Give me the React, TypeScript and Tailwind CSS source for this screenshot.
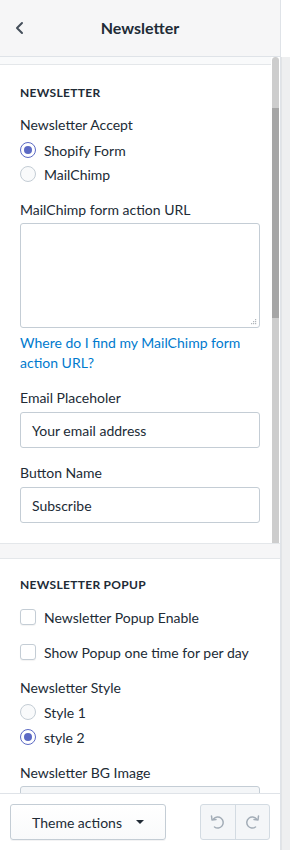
import React from "react";

const font = { fontFamily: "Lato, 'Noto Sans', Arial, sans-serif" };

function Radio({ checked, label }: { checked?: boolean; label: string }) {
  return (
    <div className="flex items-center h-[24px]">
      <span
        className={
          "w-[16px] h-[16px] rounded-full border flex items-center justify-center shrink-0 " +
          (checked ? "border-[#5c6ac4] bg-white" : "border-[#c4cdd5] bg-[#f9fafb]")
        }
      >
        {checked && <span className="w-[8px] h-[8px] rounded-full bg-[#5c6ac4]" />}
      </span>
      <span className="ml-[8px] text-[14px] text-[#212b36]">{label}</span>
    </div>
  );
}

function Checkbox({ label }: { label: string }) {
  return (
    <div className="flex items-center h-[24px]">
      <span className="w-[16px] h-[16px] rounded-[3px] border border-[#c4cdd5] bg-white shadow-[0_1px_1px_rgba(0,0,0,0.05)] shrink-0" />
      <span className="ml-[8px] text-[14px] text-[#212b36]">{label}</span>
    </div>
  );
}

function Label({ children }: { children: React.ReactNode }) {
  return <div className="text-[14px] text-[#212b36] leading-[20px]">{children}</div>;
}

function Heading({ children }: { children: React.ReactNode }) {
  return (
    <div className="text-[12px] font-bold tracking-[0.3px] text-[#212b36] leading-[16px] uppercase">
      {children}
    </div>
  );
}

function TextInput({ value }: { value: string }) {
  return (
    <div className="h-[36px] border border-[#c4cdd5] rounded-[3px] bg-white flex items-center px-[11px] text-[14px] text-[#212b36]">
      {value}
    </div>
  );
}

export default function App() {
  return (
    <div className="w-[290px] h-[850px] flex bg-white overflow-hidden" style={font}>
      <div className="w-[281px] h-full flex flex-col border-r border-[#dfe3e8]">
        {/* Header */}
        <div className="h-[57px] shrink-0 bg-[#f6f6f7] border-b border-[#dfe3e8] flex items-center relative">
          <svg className="absolute left-[14px] top-[21px]" width="12" height="14" viewBox="0 0 12 14">
            <path d="M8 2 L3 7 L8 12" fill="none" stroke="#454f5b" strokeWidth="2" strokeLinecap="round" strokeLinejoin="round" />
          </svg>
          <div className="w-full text-center text-[16px] font-bold text-[#212b36]">Newsletter</div>
        </div>

        {/* Main */}
        <div className="flex-1 flex flex-col overflow-hidden">
          <div className="h-[486px] shrink-0 flex">
            <div className="flex-1 flex flex-col">
              <div className="h-[8px] bg-[#f9fafb] border-b border-[#e4e7ea]" />
              <div className="flex-1 bg-white pl-[20px] pr-[11px] pt-[20px]">
                <Heading>Newsletter</Heading>
                <div className="mt-[14px]">
                  <Label>Newsletter Accept</Label>
                  <div className="mt-[3px]">
                    <Radio checked label="Shopify Form" />
                    <Radio label="MailChimp" />
                  </div>
                </div>
                <div className="mt-[14px]">
                  <Label>MailChimp form action URL</Label>
                  <div className="mt-[3px] h-[105px] border border-[#c4cdd5] rounded-[3px] bg-white relative">
                    <svg className="absolute right-[2px] bottom-[2px]" width="7" height="7" viewBox="0 0 7 7">
                      <rect x="5" y="1" width="1.2" height="1.2" fill="#b0b6bb" />
                      <rect x="3" y="3" width="1.2" height="1.2" fill="#b0b6bb" />
                      <rect x="5" y="3" width="1.2" height="1.2" fill="#b0b6bb" />
                      <rect x="1" y="5" width="1.2" height="1.2" fill="#b0b6bb" />
                      <rect x="3" y="5" width="1.2" height="1.2" fill="#b0b6bb" />
                      <rect x="5" y="5" width="1.2" height="1.2" fill="#b0b6bb" />
                    </svg>
                  </div>
                  <div className="mt-[5px] text-[14px] leading-[20px] text-[#007ace]">
                    Where do I find my MailChimp form action URL?
                  </div>
                </div>
                <div className="mt-[15px]">
                  <Label>Email Placeholer</Label>
                  <div className="mt-[4px]">
                    <TextInput value="Your email address" />
                  </div>
                </div>
                <div className="mt-[15px]">
                  <Label>Button Name</Label>
                  <div className="mt-[4px]">
                    <TextInput value="Subscribe" />
                  </div>
                </div>
              </div>
            </div>
            {/* inner scrollbar */}
            <div className="w-[9px] bg-white flex flex-col pl-[1px] pr-[1px]">
              <div className="flex-1 flex flex-col bg-[#cdcdcd] rounded-t-[4px]">
                <div className="h-[51px]" />
                <div className="h-[210px] bg-[#a6a6a6]" />
              </div>
            </div>
          </div>
          <div className="h-[16px] shrink-0 bg-[#f6f6f7] border-t border-b border-[#e4e7ea]" />
          <div className="flex-1 bg-white px-[20px] pt-[18px]">
            <Heading>Newsletter Popup</Heading>
            <div className="mt-[12px] flex flex-col gap-[11px]">
              <Checkbox label="Newsletter Popup Enable" />
              <Checkbox label="Show Popup one time for per day" />
            </div>
            <div className="mt-[14px]">
              <Label>Newsletter Style</Label>
              <div className="mt-[2px] flex flex-col gap-[1px]">
                <Radio label="Style 1" />
                <Radio checked label="style 2" />
              </div>
            </div>
            <div className="mt-[14px]">
              <Label>Newsletter BG Image</Label>
              <div className="mt-[3px] h-[60px] border border-[#c4cdd5] rounded-[3px] bg-[#f4f6f8]" />
            </div>
          </div>
        </div>

        {/* Footer */}
        <div className="h-[57px] shrink-0 border-t border-[#dfe3e8] bg-white flex items-center px-[10px] justify-between">
          <div className="h-[36px] w-[156px] border border-[#c4cdd5] rounded-[3px] bg-gradient-to-b from-white to-[#f9fafb] shadow-[0_1px_0_rgba(22,29,37,0.05)] flex items-center justify-center gap-[14px] text-[14px] text-[#212b36]">
            <span>Theme actions</span>
            <svg width="8" height="5" viewBox="0 0 8 5">
              <path d="M0 0 L8 0 L4 4 Z" fill="#212b36" />
            </svg>
          </div>
          <div className="h-[36px] w-[70px] border border-[#d3dbe2] rounded-[3px] bg-[#f4f6f8] flex">
            <div className="flex-1 flex items-center justify-center border-r border-[#d3dbe2]">
              <svg width="18" height="18" viewBox="0 0 18 18">
                <path d="M4.5 6 A5.5 5.5 0 1 1 5.5 14" fill="none" stroke="#a3adb7" strokeWidth="1.5" strokeLinecap="round" />
                <path d="M2.5 3 L3 7 L7 6.5" fill="none" stroke="#a3adb7" strokeWidth="1.5" strokeLinecap="round" strokeLinejoin="round" />
              </svg>
            </div>
            <div className="flex-1 flex items-center justify-center">
              <svg width="18" height="18" viewBox="0 0 18 18">
                <path d="M13.5 6 A5.5 5.5 0 1 0 12.5 14" fill="none" stroke="#a3adb7" strokeWidth="1.5" strokeLinecap="round" />
                <path d="M15.5 3 L15 7 L11 6.5" fill="none" stroke="#a3adb7" strokeWidth="1.5" strokeLinecap="round" strokeLinejoin="round" />
              </svg>
            </div>
          </div>
        </div>
      </div>
      {/* outer right strip */}
      <div className="flex-1 flex flex-col">
        <div className="h-[57px] bg-white" />
        <div className="flex-1 bg-[#eeeff0] border-l border-[#e2e4e6]" />
      </div>
    </div>
  );
}
